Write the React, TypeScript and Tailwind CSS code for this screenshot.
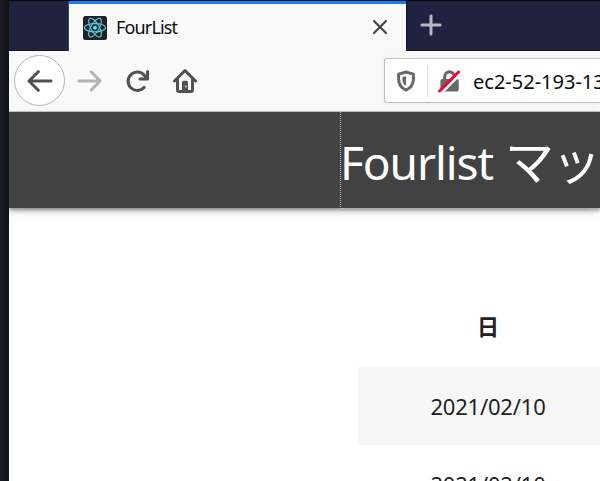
import React from "react";

const BackIcon = () => (
  <svg width="26" height="24" viewBox="0 0 26 24" fill="none" stroke="#505051" strokeWidth="3" strokeLinecap="round" strokeLinejoin="round">
    <path d="M24 12H2.5M11.3 2.7 2 12 11.3 21.3" />
  </svg>
);

const ForwardIcon = () => (
  <svg width="26" height="24" viewBox="0 0 26 24" fill="none" stroke="#b3b3b4" strokeWidth="3" strokeLinecap="round" strokeLinejoin="round">
    <path d="M2 12h21M14.2 3l9 9-9 9" />
  </svg>
);

const ReloadIcon = () => (
  <svg width="26" height="26" viewBox="0 0 26 26" fill="none" stroke="#505051" strokeWidth="3" strokeLinecap="round" strokeLinejoin="round">
    <path d="M19.2 19.3A9.2 9.2 0 1 1 19.5 7.5L21.5 10.3" />
    <path d="M22.6 3.4v7.7h-7.6" />
    <path d="M18 10.5 22.3 5.5v5z" fill="#505051" stroke="none" />
  </svg>
);

const HomeIcon = () => (
  <svg width="26" height="26" viewBox="0 0 26 26" fill="none" stroke="#505051" strokeWidth="3" strokeLinecap="round" strokeLinejoin="round">
    <path d="M2.5 13 13 2.5 23.5 13" />
    <path d="M5.5 11.5v10.2q0 1.8 1.8 1.8h11.4q1.8 0 1.8-1.8V11.5" />
    <path d="M10 23v-8.5q0-1.7 1.7-1.7h2.6q1.7 0 1.7 1.7V23z" fill="#505051" stroke="none" />
    <rect x="13.2" y="17.5" width="1.3" height="2" fill="#e8e8e8" stroke="none" />
  </svg>
);

const ReactLogo = () => (
  <svg width="24" height="24" viewBox="0 0 24 24" fill="none" stroke="#5bc5e3" strokeWidth="1.15">
    <rect width="24" height="24" rx="2.5" fill="#222222" stroke="none" />
    <ellipse cx="12" cy="11.7" rx="10.5" ry="4.1" />
    <ellipse cx="12" cy="11.7" rx="10.5" ry="4.1" transform="rotate(60 12 11.7)" />
    <ellipse cx="12" cy="11.7" rx="10.5" ry="4.1" transform="rotate(120 12 11.7)" />
    <circle cx="12" cy="11.7" r="2" fill="#61dafb" stroke="none" />
  </svg>
);

const ShieldIcon = () => (
  <svg className="shrink-0" width="20" height="22" viewBox="0 0 20 22" fill="none" stroke="#69696a" strokeWidth="3" strokeLinejoin="round">
    <path d="M10 2 17.4 4.1V9.5Q17.2 16.8 10 20.1 2.8 16.8 2.6 9.5V4.1z" />
    <path d="M10 6.2v9.9Q6.5 13.8 6.4 9.5V7.1z" fill="#69696a" stroke="none" />
  </svg>
);

const InsecureIcon = () => (
  <svg width="24" height="24" viewBox="0 0 24 24" fill="none">
    <path d="M6.7 11V7.7a4.8 4.8 0 0 1 9.6 0V11" stroke="#69696a" strokeWidth="3.2" />
    <rect x="2.4" y="10" width="18.4" height="12.6" rx="2" fill="#69696a" />
    <path d="M3.3 24.1 22.8 4.7" stroke="#ffffff" strokeWidth="2.6" />
    <path d="M1.6 22 20.6 3" stroke="#ff0039" strokeWidth="3" strokeLinecap="round" />
  </svg>
);

const dates = ["2021/02/10", "2021/02/10"];

export default function App() {
  return (
    <div className="flex h-[481px] w-[600px] overflow-hidden bg-white font-['Noto_Sans','Noto_Sans_CJK_JP',sans-serif]">
      <aside className="w-[9px] shrink-0 bg-linear-to-r from-[#1a1e22] to-[#101115]" />
      <main className="flex min-w-0 flex-1 flex-col overflow-hidden">
        <div className="flex h-[51px] shrink-0 border-t border-[#08090f] bg-[#20233f]">
          <div className="w-[60px] shrink-0 border-r border-b border-[#15172f] border-r-[#45475d]" />
          <div className="flex w-[337px] shrink-0 items-center border-t-3 border-[#0a84ff] bg-[#f9f9fa] pt-px pl-[14px] pr-[18px]">
            <div className="-mt-px"><ReactLogo /></div>
            <span className="-mt-[3px] ml-[9px] flex-1 text-[18px] leading-6 tracking-[-0.85px] text-[#0c0c0d]">FourList</span>
            <svg className="-mt-[3px]" width="16" height="16" viewBox="0 0 16 16" stroke="#464647" strokeWidth="2.2" strokeLinecap="round">
              <path d="m2 2 12 12M14 2 2 14" />
            </svg>
          </div>
          <div className="flex-1 border-b border-l border-[#15172f] pl-[13px] pt-[13px]">
            <svg width="22" height="22" viewBox="0 0 22 22" stroke="#b7b8c2" strokeWidth="3" strokeLinecap="round">
              <path d="M11 2v18M2 11h18" />
            </svg>
          </div>
        </div>
        <div className="flex h-[61px] shrink-0 items-center border-b border-[#cccccd] bg-[#f9f9fa] pb-px pl-[5px]">
          <div className="flex size-[51px] shrink-0 items-center justify-center rounded-full border border-[#b5b5b5] bg-white"><BackIcon /></div>
          <div className="ml-3 shrink-0"><ForwardIcon /></div>
          <div className="ml-[22px] shrink-0"><ReloadIcon /></div>
          <div className="ml-[21px] shrink-0"><HomeIcon /></div>
          <div className="ml-[186px] flex h-[45px] w-[216px] shrink-0 items-center overflow-hidden rounded-l-[3px] border border-r-0 border-[#bebebe] bg-white pl-[11px] shadow-[0_1px_6px_rgba(0,0,0,0.06)]">
            <ShieldIcon />
            <span className="ml-[11px] h-8 w-px shrink-0 bg-[#dedede]" />
            <span className="ml-[10px] shrink-0"><InsecureIcon /></span>
            <span className="ml-[11px] shrink-0 pt-0.5 text-[20px] leading-7 whitespace-nowrap text-[#0c0c0d]">ec2-52-193-13</span>
          </div>
        </div>
        <header className="z-10 h-24 shrink-0 bg-[#424242] pl-[331px] shadow-[0_2px_4px_rgba(0,0,0,0.4),0_4px_8px_rgba(0,0,0,0.14)]">
          <h1 className="h-[97px] w-[400px] border-b border-l border-dotted border-[#bdbdbd] text-[46px] leading-[98px] font-normal whitespace-nowrap text-white">
            <span className="-ml-px tracking-[-1.05px]">Fourlist </span>
            <span className="ml-[1px] text-[49px] tracking-[-2px]">マッ</span>
          </h1>
        </header>
        <section className="ml-[349px] w-[260px] shrink-0 pt-[80px] text-center text-[#212121]">
          <div className="h-[79px] text-[22px] leading-[77px] font-bold">日</div>
          {dates.map((date, index) => (
            <div key={index} className="h-[78px] text-[22px] leading-[78px] tracking-[-0.2px] odd:bg-white even:bg-[#f7f7f7]">{date}</div>
          ))}
        </section>
      </main>
    </div>
  );
}
